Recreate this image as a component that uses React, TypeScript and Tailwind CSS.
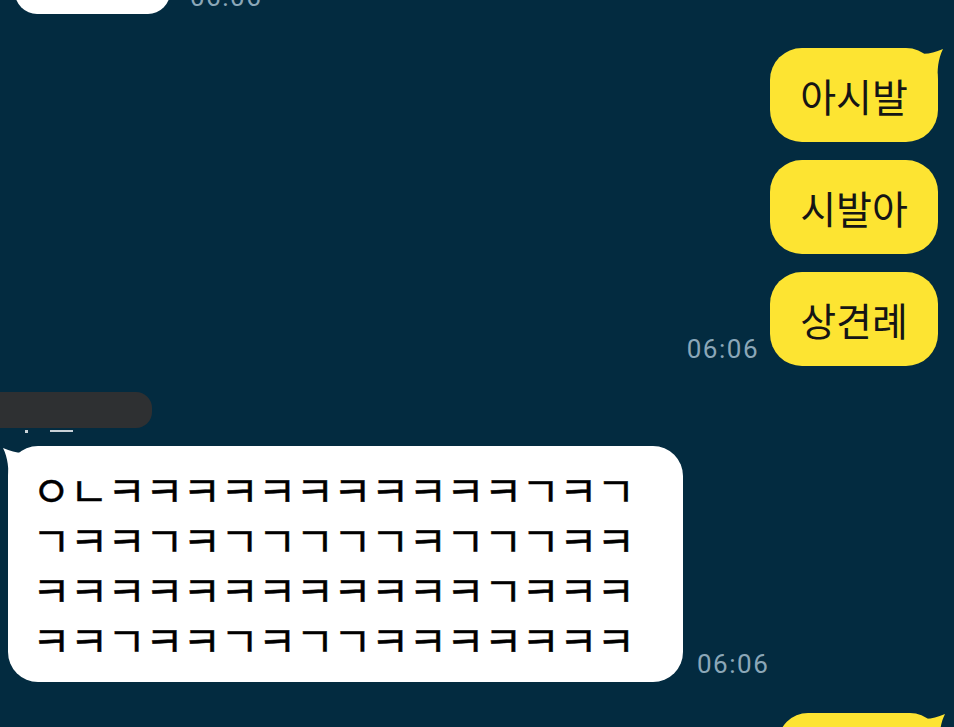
import React from "react";

const KR = { fontFamily: '"Noto Sans CJK KR", "Noto Sans", sans-serif' };
const TIME = { fontFamily: 'Roboto, "Noto Sans", sans-serif' };

// jamo rows of the long white message
const rows = [
  "ㅇㄴㅋㅋㅋㅋㅋㅋㅋㅋㅋㅋㅋㄱㅋㄱ",
  "ㄱㅋㅋㄱㅋㄱㄱㄱㄱㄱㅋㄱㄱㄱㅋㅋ",
  "ㅋㅋㅋㅋㅋㅋㅋㅋㅋㅋㅋㅋㄱㅋㅋㅋ",
  "ㅋㅋㄱㅋㅋㄱㅋㄱㄱㅋㅋㅋㅋㅋㅋㅋ",
];

function Time({ className = "" }: { className?: string }) {
  return (
    <span style={TIME} className={`text-[26px] leading-none tracking-[1.5px] text-[#8ba7b8] ${className}`}>
      06:06
    </span>
  );
}

function RightTail() {
  return (
    <svg className="absolute -right-[7px] top-[0px]" width="28" height="36" viewBox="0 0 28 36">
      <path d="M0 5 C9 7 16 5 26 1 C21 11 20 22 21 34 L0 34 Z" fill="#fde432" />
    </svg>
  );
}

function LeftTail() {
  return (
    <svg className="absolute -left-[7px] top-[1px]" width="28" height="36" viewBox="0 0 28 36">
      <path d="M28 5 C19 7 12 5 2 1 C7 11 8 22 7 34 L28 34 Z" fill="#ffffff" />
    </svg>
  );
}

function YellowBubble({ text, tail = false }: { text: string; tail?: boolean }) {
  return (
    <div
      style={KR}
      className="relative flex h-[94px] w-[168px] items-center justify-center rounded-[32px] bg-[#fde432] text-[39px] text-[#151515]"
    >
      {tail && <RightTail />}
      <span className="relative">{text}</span>
    </div>
  );
}

export default function App() {
  return (
    <div className="h-[727px] w-[954px] overflow-hidden bg-[#032b40]">
      <div className="flex flex-col">
        {/* previous message, mostly scrolled out */}
        <div className="-mt-[46px] flex items-end gap-[20px] pl-[15px]">
          <div className="h-[60px] w-[155px] rounded-[22px] bg-white" />
          <Time className="mb-[4px]" />
        </div>

        {/* my messages */}
        <div className="mt-[34px] flex flex-col items-end gap-[18px] pr-[16px]">
          <YellowBubble text="아시발" tail />
          <YellowBubble text="시발아" />
          <div className="flex items-end gap-[11px]">
            <Time className="mb-[4px]" />
            <YellowBubble text="상견례" />
          </div>
        </div>

        {/* sender name (hidden) */}
        <div className="mt-[26px] h-[36px] w-[152px] rounded-r-[16px] bg-[#2e3032]" />
        <div className="flex h-[18px] items-start pt-[2px]">
          <span className="ml-[25px] h-[3px] w-[3px] bg-[#c9d2d8]" />
          <span className="ml-[22px] h-[2px] w-[23px] bg-[#c9d2d8]" />
        </div>

        {/* their message */}
        <div className="flex items-end gap-[14px] pl-[8px]">
          <div className="relative w-[675px] rounded-[30px] bg-white pb-[18px] pl-[24px] pt-[18px]">
            <LeftTail />
            <div style={KR} className="relative text-[42px] leading-[50px] tracking-[-1px] text-black [-webkit-text-stroke:0.4px_black]">
              {rows.map((r) => (
                <div key={r} className="whitespace-nowrap">
                  {r}
                </div>
              ))}
            </div>
          </div>
          <Time className="mb-[5px]" />
        </div>

        {/* next message, cut off */}
        <div className="mt-[31px] flex justify-end pr-[14px]">
          <div className="relative h-[60px] w-[162px] rounded-[30px] bg-[#fde432]">
            <RightTail />
          </div>
        </div>
      </div>
    </div>
  );
}
